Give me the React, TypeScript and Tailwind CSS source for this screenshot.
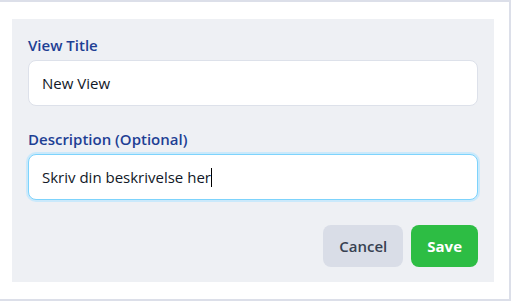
export default function App() {
  return (
    <div
      className="w-[511px] h-[301px] bg-white border-t-2 border-r-2 border-b-2 border-[#dcdfe9] pl-3 pt-[17px]"
      style={{ fontFamily: '"Open Sans", "Noto Sans", sans-serif' }}
    >
      {/* Form panel */}
      <div className="w-[482px] bg-[#eef0f4] px-4 pt-4 pb-[15px]">
        <label className="block text-[15px] font-semibold text-[#1e3f94] leading-5 mb-[5px]">
          View Title
        </label>
        <div className="h-[46px] flex items-center rounded-lg bg-white border border-[#dde1ea] px-[13px] text-[15px] text-[#111827]">
          New View
        </div>

        <label className="block text-[15px] font-semibold text-[#1e3f94] leading-5 mt-[23px] mb-[5px]">
          Description (Optional)
        </label>
        <div className="h-[46px] flex items-center rounded-lg bg-white border border-[#7dd3fc] shadow-[0_0_0_2px_rgba(186,230,253,0.7)] px-[13px] text-[15px] text-[#111827]">
          Skriv din beskrivelse her
          <span className="w-px h-[19px] bg-black" />
        </div>

        <div className="flex justify-end gap-2 mt-[25px]">
          <button className="h-[42px] px-4 rounded-lg bg-[#d9dde7] text-[15px] font-semibold text-[#374151]">
            Cancel
          </button>
          <button className="h-[42px] px-4 rounded-lg bg-[#2dbd44] text-[15px] font-bold text-white">
            Save
          </button>
        </div>
      </div>
    </div>
  );
}
